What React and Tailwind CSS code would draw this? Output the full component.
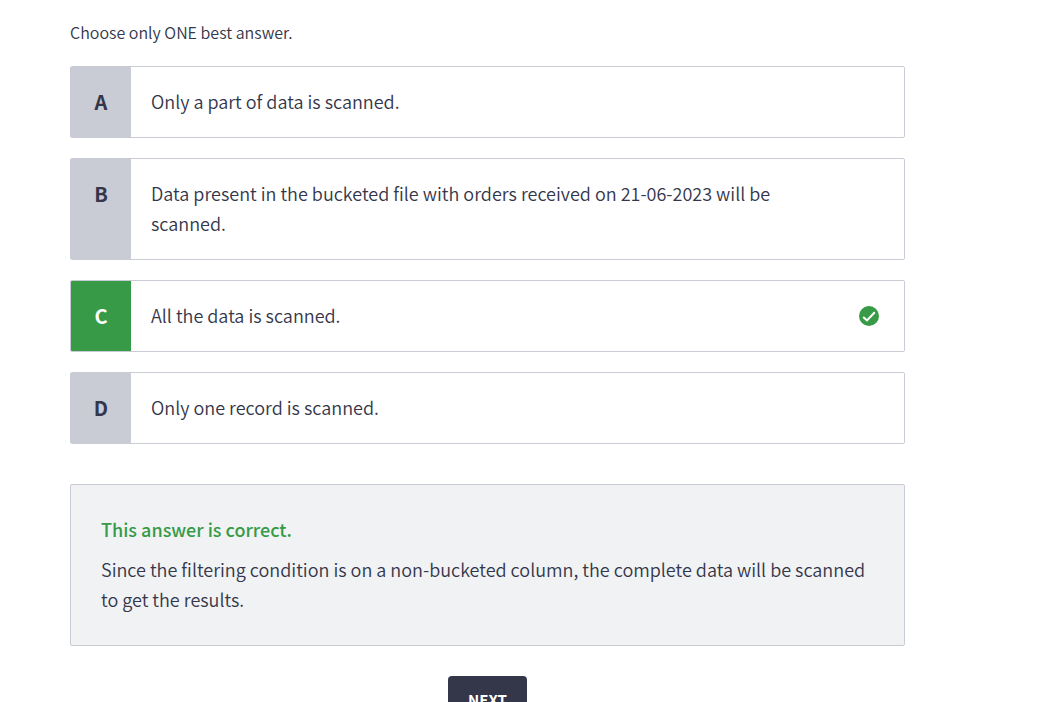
const OPTIONS = [
  { key: 'A', text: 'Only a part of data is scanned.' },
  { key: 'B', text: 'Data present in the bucketed file with orders received on 21-06-2023 will be scanned.' },
  { key: 'C', text: 'All the data is scanned.', correct: true },
  { key: 'D', text: 'Only one record is scanned.' },
];

function CorrectIcon() {
  return (
    <svg viewBox="0 0 20 20" className="size-5 shrink-0" role="img" aria-label="Correct">
      <circle cx="10" cy="10" r="10" fill="#369a47" />
      <path d="M4.2 10.9 8 14.4 15.8 6.3" fill="none" stroke="#fff" strokeWidth="2.1" />
    </svg>
  );
}

function Option({ option }) {
  return (
    <button
      type="button"
      className="flex w-full border border-[#c9cbd5] rounded-xs overflow-hidden bg-white text-left"
    >
      <span
        className={
          option.correct
            ? 'w-15 shrink-0 self-stretch py-5 text-center text-xl leading-[30px] font-bold bg-[#369a47] text-white'
            : 'w-15 shrink-0 self-stretch py-5 text-center text-xl leading-[30px] font-bold bg-[#c9cbd5]'
        }
      >
        {option.key}
      </span>
      <span className="flex-1 pt-[19px] pb-[21px] pl-5 pr-20">{option.text}</span>
      {option.correct && (
        <span className="self-center pr-[25px]">
          <CorrectIcon />
        </span>
      )}
    </button>
  );
}

export default function App() {
  return (
    <div className="min-h-screen bg-white pb-10 font-['Noto_Sans_CJK_SC',sans-serif] font-[350] text-[#34364a]">
      <main className="ml-[70px] mr-[135px] pt-[19px] text-lg leading-[30px]">
        <p className="mb-[21px] text-base leading-[26px]">Choose only ONE best answer.</p>
        <div className="flex flex-col gap-5">
          {OPTIONS.map((option) => (
            <Option key={option.key} option={option} />
          ))}
        </div>
        <section className="mt-10 rounded-xs border border-[#c9cbd5] bg-[#f1f2f4] px-[30px] pt-[29px] pb-[31px]">
          <h2 className="mb-[10px] font-medium text-[#369a47]">This answer is correct.</h2>
          <p>
            Since the filtering condition is on a non-bucketed column, the complete data will be scanned to get the
            results.
          </p>
        </section>
        <div className="mt-[30px] flex justify-center">
          <button type="button" className="rounded-sm bg-[#34364a] px-5 py-3 text-[15px] leading-6 font-bold text-white">
            NEXT
          </button>
        </div>
      </main>
    </div>
  );
}
